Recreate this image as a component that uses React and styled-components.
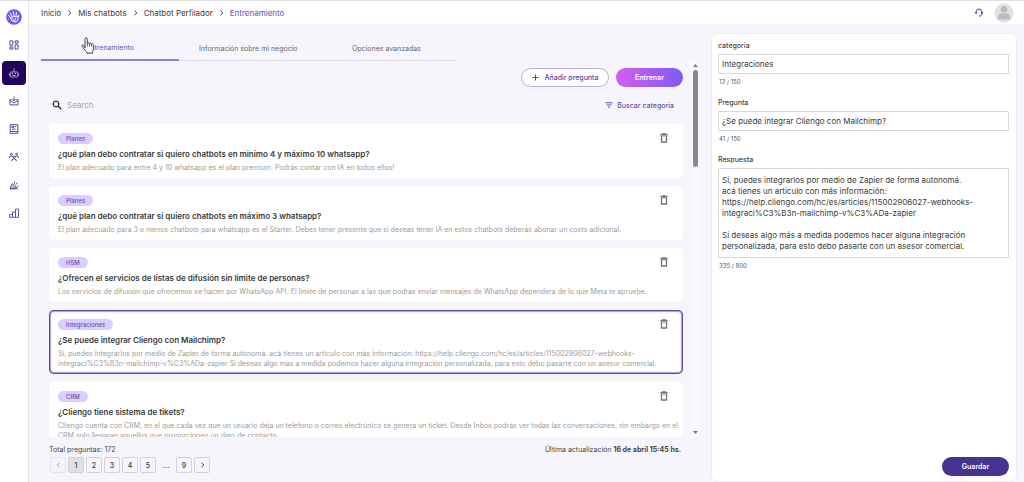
import { useState } from "react";
import styled, { createGlobalStyle, css } from "styled-components";

const GlobalStyle = createGlobalStyle`
  * {
    box-sizing: border-box;
  }
  body {
    margin: 0;
    background: #f6f5fc;
    color: #3a3a3a;
    font-family: Inter, "Liberation Sans", sans-serif;
    font-size: 8px;
  }
  button, input, textarea {
    font-family: inherit;
  }
`;

const Page = styled.div`
  display: flex;
  height: 100vh;
  border-top: 1px solid #dedede;
`;

const Sidebar = styled.nav`
  flex: none;
  width: 29px;
  display: flex;
  flex-direction: column;
  align-items: center;
  padding-top: 8px;
  background: #fff;
  border-right: 1px solid #e6e5ee;
`;

const Logo = styled.svg`
  width: 16px;
  height: 16px;
  margin-bottom: 6px;
`;

const SideLink = styled.a`
  display: flex;
  align-items: center;
  justify-content: center;
  width: 24px;
  height: 24px;
  margin: 2px 0;
  border-radius: 4px;
  color: ${(props) => (props.$active ? "#e4dcff" : "#5a4697")};
  background: ${(props) => (props.$active ? "#24035c" : "transparent")};
`;

const SideIcon = styled.svg`
  width: 10px;
  height: 10px;
  fill: none;
  stroke: currentColor;
  stroke-width: 1;
`;

const Main = styled.div`
  flex: 1;
  min-width: 0;
  display: flex;
  flex-direction: column;
`;

const TopBar = styled.header`
  flex: none;
  height: 23px;
  display: flex;
  align-items: center;
  justify-content: space-between;
  padding: 0 10px 0 12px;
  background: #fff;
`;

const Breadcrumb = styled.nav`
  display: flex;
  align-items: center;
  gap: 6px;
`;

const Crumb = styled.a`
  font-size: 8px;
  line-height: 10px;
  text-decoration: none;
  color: ${(props) => (props.$current ? "#6b51b8" : "#3a3a3a")};
`;

const CrumbArrow = styled.svg`
  width: 5px;
  height: 6px;
  fill: none;
  stroke: #444;
`;

const UserArea = styled.div`
  display: flex;
  align-items: center;
  gap: 11px;
`;

const IconButton = styled.button`
  display: flex;
  padding: 0;
  border: 0;
  background: none;
  color: ${(props) => props.$color || "#757575"};
  cursor: pointer;
`;

const Body = styled.div`
  flex: 1;
  min-height: 0;
  display: grid;
  grid-template-columns: minmax(0, 658fr) minmax(0, 306fr);
  column-gap: 12px;
  padding: 9px 7px 0 12px;
`;

const Left = styled.main`
  display: flex;
  flex-direction: column;
  min-height: 0;
`;

const Tabs = styled.div`
  flex: none;
  display: flex;
  height: 28px;
`;

const Tab = styled.button`
  width: 21%;
  padding: 3px 0 0;
  border: 0;
  border-bottom: ${(props) => (props.$active ? "2px solid #9482cf" : "1px solid #dbd9e4")};
  background: none;
  font-size: 7px;
  color: ${(props) => (props.$active ? "#6b51b8" : "#6a6a6a")};
  cursor: pointer;
`;

const ScrollArea = styled.div`
  flex: 1;
  min-height: 0;
  display: flex;
`;

const ScrollContent = styled.div`
  flex: 1;
  min-width: 0;
  overflow: hidden;
  padding: 7px 8px 0 8px;
`;

const ScrollBar = styled.div`
  flex: none;
  width: 8px;
  display: flex;
  flex-direction: column;
  align-items: center;
  justify-content: space-between;
  padding: 3px 0;
  background: #fafafb;
`;

const ScrollTrack = styled.div`
  flex: 1;
  width: 5px;
  margin: 3px 0;
`;

const ScrollThumb = styled.div`
  height: 27%;
  border-radius: 3px;
  background: #8a8a8a;
`;

const ScrollArrow = styled.svg`
  width: 5px;
  height: 3px;
  fill: #777;
`;

const Actions = styled.div`
  display: flex;
  justify-content: flex-end;
  gap: 7px;
`;

const pill = css`
  display: flex;
  align-items: center;
  justify-content: center;
  height: 19px;
  border-radius: 10px;
  font-size: 7px;
  cursor: pointer;
`;

const OutlineButton = styled.button`
  ${pill}
  width: 88px;
  gap: 6px;
  padding: 0;
  border: 1px solid #b9addf;
  background: #fff;
  color: #5b45a5;
  font-weight: 500;
`;

const GradientButton = styled.button`
  ${pill}
  width: 67px;
  padding: 0;
  border: 0;
  background: linear-gradient(90deg, #d65df0, #7b5cf0);
  color: #fff;
  font-weight: 600;
`;

const SaveButton = styled.button`
  ${pill}
  width: 67px;
  padding: 0;
  border: 0;
  background: #46348f;
  color: #fff;
  font-weight: 600;
`;

const SearchRow = styled.div`
  display: flex;
  align-items: center;
  justify-content: space-between;
  height: 20px;
  margin: 8px 9px 9px 3px;
`;

const SearchLabel = styled.label`
  display: flex;
  align-items: center;
  gap: 5px;
  color: #333;
`;

const SearchInput = styled.input`
  width: 160px;
  padding: 0;
  border: 0;
  outline: 0;
  background: none;
  font-size: 8px;
  &::placeholder {
    color: #a3a3a8;
  }
`;

const FilterButton = styled.button`
  display: flex;
  align-items: center;
  gap: 4px;
  padding: 0;
  border: 0;
  background: none;
  font-size: 7px;
  font-weight: 500;
  color: #6650ae;
  cursor: pointer;
`;

const QuestionList = styled.div`
  display: flex;
  flex-direction: column;
  gap: 8px;
`;

const Card = styled.article`
  padding: 9px 5px 5px 9px;
  border-radius: 5px;
  background: #fff;
  box-shadow: ${(props) =>
    props.$selected ? "inset 0 0 0 1px #5e48b0, inset 0 0 1px 2px #a699da" : "none"};
`;

const CardHead = styled.div`
  display: flex;
  justify-content: space-between;
  height: 11px;
  padding-right: 10px;
`;

const Tag = styled.span`
  padding: 0 8px;
  border-radius: 6px;
  background: #d9ceff;
  color: #6a4fb5;
  font-size: 6px;
  font-weight: 500;
  line-height: 11px;
`;

const Question = styled.h3`
  margin: 5px 0 4px;
  font-size: 8px;
  font-weight: 600;
  line-height: 10px;
  color: #3a3a3a;
`;

const Answer = styled.p`
  margin: 0;
  font-size: 7px;
  line-height: 10px;
  color: #9c9c9c;
`;

const Footer = styled.footer`
  flex: none;
  height: 45px;
  padding: 8px 18px 0 8px;
`;

const FooterInfo = styled.div`
  display: flex;
  justify-content: space-between;
  font-size: 7px;
  line-height: 9px;
  color: #444;
`;

const Pagination = styled.div`
  display: flex;
  gap: 2px;
  margin: 3px 0 0 1px;
`;

const PageButton = styled.button`
  display: flex;
  align-items: center;
  justify-content: center;
  width: 16px;
  height: 16px;
  padding: 0;
  border: 1px solid #d3d2da;
  border-radius: 2px;
  background: ${(props) => (props.$current ? "#e1e0e6" : "transparent")};
  color: #3a3a3a;
  font-size: 7px;
  font-weight: 500;
  cursor: pointer;
  &:disabled {
    opacity: 0.5;
  }
`;

const Ellipsis = styled.span`
  width: 16px;
  text-align: center;
  line-height: 16px;
`;

const Panel = styled.aside`
  display: flex;
  flex-direction: column;
  padding: 7px 7px 5px 6px;
  border-radius: 6px;
  border: 1px solid #ecebf3;
  background: #fff;
`;

const Field = styled.div`
  display: flex;
  flex-direction: column;
  margin-bottom: 12px;
`;

const FieldLabel = styled.label`
  margin-bottom: 4px;
  font-size: 7px;
  font-weight: 500;
  line-height: 9px;
  color: #444;
`;

const fieldBox = css`
  width: 100%;
  border: 1px solid #d8d8d8;
  border-radius: 1px;
  outline: 0;
  background: #fff;
  color: #3a3a3a;
  font-size: 8px;
`;

const TextInput = styled.input`
  ${fieldBox}
  height: 20px;
  padding: 0 3px;
`;

const TextArea = styled.textarea`
  ${fieldBox}
  display: block;
  height: 90px;
  padding: 6px 3px;
  line-height: 11px;
  resize: none;
  overflow: hidden;
`;

const Counter = styled.span`
  margin: 4px 0 0 1px;
  font-size: 6px;
  line-height: 8px;
  color: #555;
`;

const PanelActions = styled.div`
  display: flex;
  justify-content: flex-end;
  margin-top: auto;
`;

const Cursor = styled.svg`
  position: absolute;
  left: 81px;
  top: 37px;
  width: 14px;
  height: 18px;
  pointer-events: none;
`;

const sideItems = [
  {
    name: "Panel",
    draw: (
      <path d="M.9 .9h3v4.200h-3zM6.100 .9h3v2.200h-3zM.9 6.900h3v2.200h-3zM6.100 4.900h3v4.200h-3z" />
    ),
  },
  {
    name: "Chatbots",
    active: true,
    draw: (
      <>
        <path d="M2 4h6q.8 0 .8.8v3.400q0 .8-.8.800H2q-.8 0-.8-.8V4.800q0-.8.8-.8zM5 4V1.500M.4 5.500v2M9.600 5.500v2M3.400 7.500h3.200" strokeWidth=".7" />
        <path d="M3 5.500h1M6 5.500h1M4.500 1h1" />
      </>
    ),
  },
  {
    name: "Inbox",
    draw: (
      <path d="M2.500 3.500H1v5.400h8V3.500H7.500M1 4.500l4 2.500 4-2.500M5 .5v4.300M3.500 3.300L5 4.900l1.500-1.600" />
    ),
  },
  {
    name: "Contactos",
    draw: (
      <path d="M1.200 .7h7.600v8.600H1.200zM1.200 7.400h7.600M3 2.300h1.500v1.500H3zM4.500 3.500L6.500 5.700M5.800 2.500h1.400M3 5.600h1.800" />
    ),
  },
  {
    name: "Equipo",
    draw: (
      <path d="M1.300 2.300a1 1 0 1 0 2 0a1 1 0 1 0-2 0M6.700 2.300a1 1 0 1 0 2 0a1 1 0 1 0-2 0M4 5a1 1 0 1 0 2 0a1 1 0 1 0-2 0M.6 6V4.800l1.700-.9 1.700 1M9.400 6V4.800l-1.700-.9-1.700 1M2.800 9V7.800L5 6.600l2.200 1.200V9" />
    ),
  },
  {
    name: "Campañas",
    draw: (
      <>
        <path d="M1 8.800L3.300 3.500 7.800 7.800z" fill="currentColor" fillOpacity=".3" />
        <path d="M1 8.800h8M5.500 3.500V1.500M6.600 4.700l1.900-2M7.800 6.300h1.700" />
      </>
    ),
  },
  {
    name: "Reportes",
    draw: <path d="M.5 6.500h3v2.800h-3zM3.500 4h3v5.300h-3zM6.500 1h3v8.300h-3z" strokeWidth=".9" />,
  },
];

const questions = [
  {
    tag: "Planes",
    title: "¿qué plan debo contratar si quiero chatbots en minimo 4 y máximo 10 whatsapp?",
    answer:
      "El plan adecuado para entre 4 y 10 whatsapp es el plan premium. Podrás contar con IA en todos ellos!",
  },
  {
    tag: "Planes",
    title: "¿qué plan debo contratar si quiero chatbots en máximo 3 whatsapp?",
    answer:
      "El plan adecuado para 3 o menos chatbots para whatsapp es el Starter. Debes tener presente que si deseas tener IA en estos chatbots deberás abonar un costo adicional.",
  },
  {
    tag: "HSM",
    title: "¿Ofrecen el servicios de listas de difusión sin limite de personas?",
    answer:
      "Los servicios de difusión que ofrecemos se hacen por WhatsApp API. El limite de personas a las que podrás enviar mensajes de WhatsApp dependerá de lo que Meta te apruebe.",
  },
  {
    tag: "Integraciones",
    title: "¿Se puede integrar Cliengo con Mailchimp?",
    answer:
      "Si, puedes integrarlos por medio de Zapier de forma autonomá. acá tienes un articulo con más información: https://help.cliengo.com/hc/es/articles/115002906027-webhooks-integraci%C3%B3n-mailchimp-v%C3%ADa-zapier Si deseas algo más a medida podemos hacer alguna integración personalizada, para esto debo pasarte con un asesor comercial.",
  },
  {
    tag: "CRM",
    title: "¿Cliengo tiene sistema de tikets?",
    answer:
      "Cliengo cuenta con CRM, en el que cada vez que un usuario deja un teléfono o correo electrónico se genera un ticket. Desde Inbox podrás ver todas las conversaciones, sin embargo en el CRM solo llegaran aquellos que proporcionen un dato de contacto.",
  },
];

const respuesta = `Si, puedes integrarlos por medio de Zapier de forma autonomá.
acá tienes un articulo con más información:
https://help.cliengo.com/hc/es/articles/115002906027-webhooks-integraci%C3%B3n-mailchimp-v%C3%ADa-zapier

Si deseas algo más a medida podemos hacer alguna integración personalizada, para esto debo pasarte con un asesor comercial.`;

const tabs = ["Entrenamiento", "Información sobre mi negocio", "Opciones avanzadas"];

const Arrow = () => (
  <CrumbArrow viewBox="0 0 5 6">
    <path d="M1.500 .7L3.800 3 1.500 5.300" />
  </CrumbArrow>
);

const ArrowLeft = () => (
  <CrumbArrow viewBox="0 0 5 6">
    <path d="M3.500 .7L1.200 3l2.300 2.300" />
  </CrumbArrow>
);

const TrashIcon = () => (
  <svg width="8" height="10" viewBox="0 0 8 10" fill="none" stroke="currentColor">
    <path d="M1.500 2.500v6.500h5V2.500" strokeWidth="1.300" />
    <path d="M.3 1.500h7.400" strokeWidth="1.300" />
    <path d="M2.500 .6h3M1.500 2.900h5" />
  </svg>
);

export default function App() {
  const [tab, setTab] = useState(0);
  const [selected, setSelected] = useState(3);
  const [page, setPage] = useState(1);

  return (
    <>
      <GlobalStyle />
      <Page>
        <Sidebar>
          <Logo viewBox="0 0 16 16">
            <circle cx="8" cy="8" r="7.800" fill="#7656ef" />
            <g fill="none" stroke="#fff" strokeLinecap="round">
              <path d="M4.500 9L2.800 6.200M6 7.500L4.300 3.800M8 7L7.300 2.800M10 7.300l.4-4" />
              <path d="M4.500 9.200q1.500 4 4.500 3.800 3.500-.4 3-4l.8-2.500-2 1.200q-3-1.500-6.300 1.500z" />
              <path d="M7 9.800h.1M9.500 9.300h.1M7.500 11.300q1 .5 2-.3" />
            </g>
          </Logo>
          {sideItems.map((item) => (
            <SideLink key={item.name} href="#" aria-label={item.name} $active={item.active}>
              <SideIcon viewBox="0 0 10 10">{item.draw}</SideIcon>
            </SideLink>
          ))}
        </Sidebar>
        <Main>
          <TopBar>
            <Breadcrumb>
              <Crumb href="#">Inicio</Crumb>
              <Arrow />
              <Crumb href="#">Mis chatbots</Crumb>
              <Arrow />
              <Crumb href="#">Chatbot Perfilador</Crumb>
              <Arrow />
              <Crumb href="#" $current>Entrenamiento</Crumb>
            </Breadcrumb>
            <UserArea>
              <IconButton aria-label="Soporte" $color="#5a4697">
                <svg width="8" height="9" viewBox="0 0 8 9" fill="none" stroke="currentColor">
                  <path d="M1.300 5V3.700a2.700 2.700 0 0 1 5.400 0V6.500q0 1-1.200 1.500H4" />
                  <path d="M1 3.800v2M7 3.800v2" strokeWidth="1.600" />
                </svg>
              </IconButton>
              <IconButton aria-label="Cuenta">
                <svg width="20" height="20" viewBox="0 0 20 20">
                  <circle cx="10" cy="10" r="9.700" fill="#e2e2e2" />
                  <circle cx="10" cy="6.300" r="3.400" fill="#bdbdbd" />
                  <path d="M3.800 16.500v-2.500q0-3.500 3.500-3.500h5.400q3.500 0 3.500 3.500v2.500z" fill="#bdbdbd" />
                </svg>
              </IconButton>
            </UserArea>
          </TopBar>
          <Body>
            <Left>
              <Tabs role="tablist">
                {tabs.map((name, i) => (
                  <Tab key={name} role="tab" aria-selected={i === tab} $active={i === tab} onClick={() => setTab(i)}>
                    {name}
                  </Tab>
                ))}
              </Tabs>
              <ScrollArea>
                <ScrollContent>
                  <Actions>
                    <OutlineButton>
                      <svg width="7" height="7" viewBox="0 0 7 7" stroke="currentColor">
                        <path d="M3.500 .5v6M.5 3.500h6" />
                      </svg>
                      Añadir pregunta
                    </OutlineButton>
                    <GradientButton>Entrenar</GradientButton>
                  </Actions>
                  <SearchRow>
                    <SearchLabel>
                      <svg width="10" height="10" viewBox="0 0 10 10" fill="none" stroke="currentColor">
                        <circle cx="4" cy="4" r="2.800" strokeWidth="1.200" />
                        <path d="M6 6l3.300 3.300" strokeWidth="1.500" />
                      </svg>
                      <SearchInput placeholder="Search" aria-label="Search" />
                    </SearchLabel>
                    <FilterButton>
                      <svg width="8" height="6" viewBox="0 0 8 6" stroke="currentColor">
                        <path d="M.3 .8h7.400M1.500 3h5M3 5.200h2" />
                      </svg>
                      Buscar categoria
                    </FilterButton>
                  </SearchRow>
                  <QuestionList>
                    {questions.map((q, i) => (
                      <Card key={q.title} $selected={i === selected} onClick={() => setSelected(i)}>
                        <CardHead>
                          <Tag>{q.tag}</Tag>
                          <IconButton aria-label="Eliminar">
                            <TrashIcon />
                          </IconButton>
                        </CardHead>
                        <Question>{q.title}</Question>
                        <Answer>{q.answer}</Answer>
                      </Card>
                    ))}
                  </QuestionList>
                </ScrollContent>
                <ScrollBar>
                  <ScrollArrow viewBox="0 0 5 3">
                    <path d="M0 3L2.500 0 5 3z" />
                  </ScrollArrow>
                  <ScrollTrack>
                    <ScrollThumb />
                  </ScrollTrack>
                  <ScrollArrow viewBox="0 0 5 3">
                    <path d="M0 0L2.500 3 5 0z" />
                  </ScrollArrow>
                </ScrollBar>
              </ScrollArea>
              <Footer>
                <FooterInfo>
                  <span>Total preguntas: 172</span>
                  <span>
                    Última actualización <b>16 de abril 15:45 hs.</b>
                  </span>
                </FooterInfo>
                <Pagination>
                  <PageButton disabled aria-label="Anterior">
                    <ArrowLeft />
                  </PageButton>
                  {[1, 2, 3, 4, 5].map((n) => (
                    <PageButton key={n} $current={n === page} onClick={() => setPage(n)}>
                      {n}
                    </PageButton>
                  ))}
                  <Ellipsis>...</Ellipsis>
                  <PageButton $current={page === 9} onClick={() => setPage(9)}>9</PageButton>
                  <PageButton aria-label="Siguiente">
                    <Arrow />
                  </PageButton>
                </Pagination>
              </Footer>
            </Left>
            <Panel>
              <Field>
                <FieldLabel htmlFor="categoria">categoria</FieldLabel>
                <TextInput id="categoria" defaultValue="Integraciones" />
                <Counter>13 / 150</Counter>
              </Field>
              <Field>
                <FieldLabel htmlFor="pregunta">Pregunta</FieldLabel>
                <TextInput id="pregunta" defaultValue="¿Se puede integrar Cliengo con Mailchimp?" />
                <Counter>41 / 150</Counter>
              </Field>
              <Field>
                <FieldLabel htmlFor="respuesta">Respuesta</FieldLabel>
                <TextArea id="respuesta" defaultValue={respuesta} />
                <Counter>335 / 800</Counter>
              </Field>
              <PanelActions>
                <SaveButton>Guardar</SaveButton>
              </PanelActions>
            </Panel>
          </Body>
        </Main>
        <Cursor viewBox="0 0 14 18" aria-hidden="true">
          <path
            d="M4 11V2.200q0-1.400 1.100-1.400t1.200 1.400V6.500q.1-1 1.100-.9.9.1 1 1.200.2-.8 1.100-.7.9.1 1 1.200.3-.6 1-.4.9.2.9 1.500v3.300q0 1.700-.9 3v1.500H5.800v-1.200Q4.500 14 3.200 12L1.200 9.700q-.7-1 .1-1.600.8-.5 1.500.2z"
            fill="#fff"
            stroke="#333"
            strokeWidth=".9"
          />
          <path d="M6.300 6.500v3M8.400 6.900v2.600M10.500 7.300v2.200" stroke="#333" strokeWidth=".8" />
        </Cursor>
      </Page>
    </>
  );
}
